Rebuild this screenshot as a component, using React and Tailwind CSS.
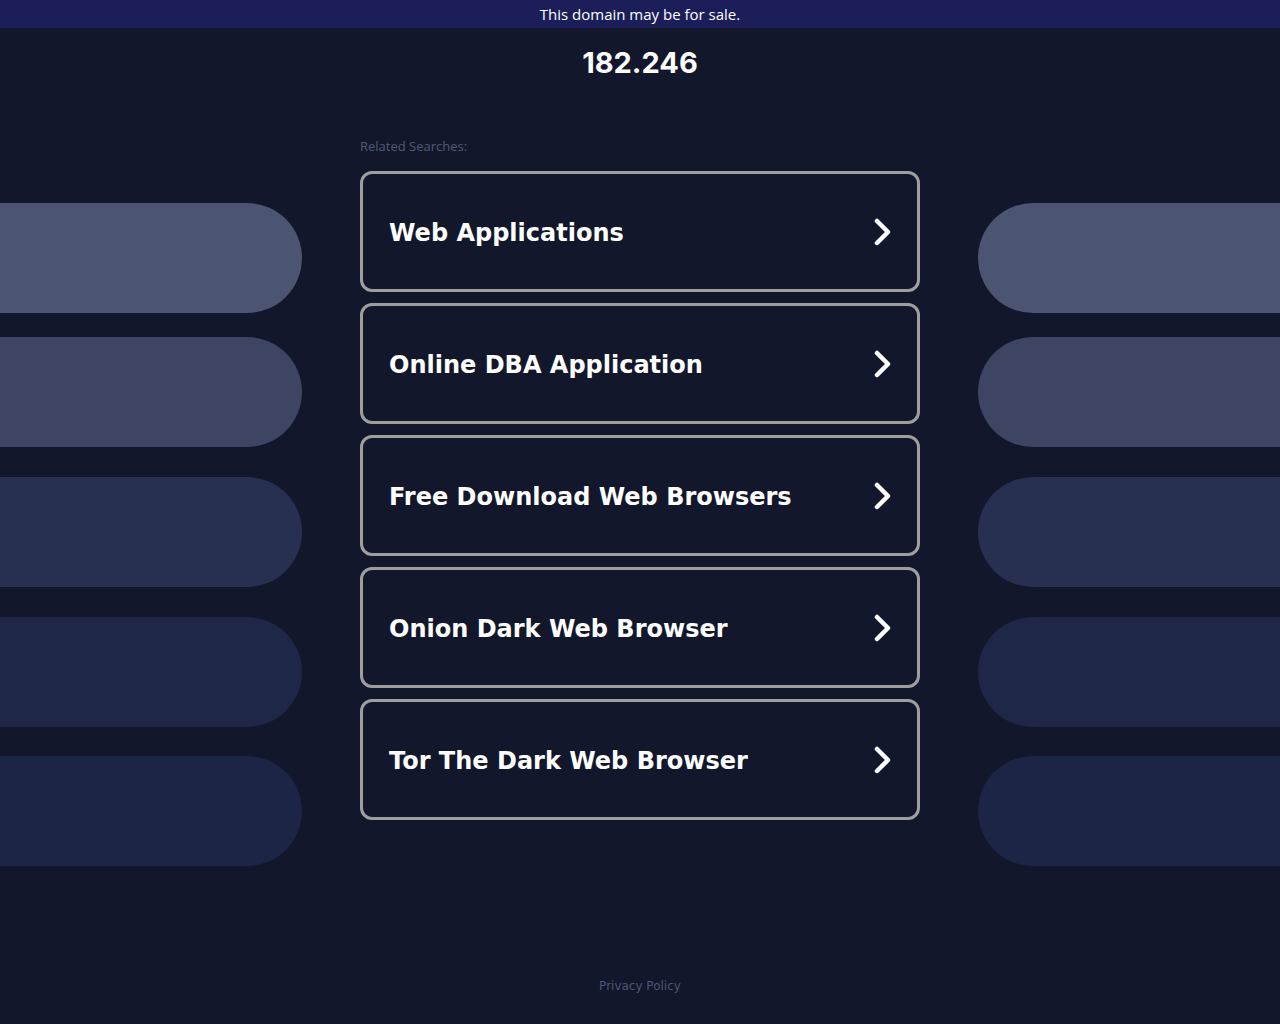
import React from "react";

const cards = [
  "Web Applications",
  "Online DBA Application",
  "Free Download Web Browsers",
  "Onion Dark Web Browser",
  "Tor The Dark Web Browser",
];

const pills = [
  { c: "bg-[#4b5471]", mt: "mt-[175px]" },
  { c: "bg-[#3d4563]", mt: "mt-[24px]" },
  { c: "bg-[#283051]", mt: "mt-[30px]" },
  { c: "bg-[#1e2748]", mt: "mt-[30px]" },
  { c: "bg-[#1c2546]", mt: "mt-[29px]" },
];

function Chevron() {
  return (
    <svg width="22" height="28" viewBox="0 0 22 28" fill="none">
      <path d="M6 3 L17 14 L6 25" stroke="white" strokeWidth="4.5" strokeLinecap="round" strokeLinejoin="round" />
    </svg>
  );
}

export default function App() {
  return (
    <div className="min-h-[1024px] w-full bg-[#12172b] flex flex-col" style={{ fontFamily: '"DejaVu Sans", sans-serif' }}>
      <div className="h-[28px] bg-[#1b1e58] flex items-center justify-center text-white text-[15px]" style={{ fontFamily: '"Open Sans", sans-serif' }}>
        This domain may be for sale.
      </div>
      <div className="flex flex-1">
        <div className="w-[302px] flex flex-col">
          {pills.map((p, i) => (
            <div key={i} className={`h-[110px] rounded-r-[55px] ${p.c} ${p.mt}`} />
          ))}
        </div>
        <div className="w-[560px] mx-[58px] flex flex-col">
          <div className="text-center text-white font-bold text-[29px] leading-none mt-[20px]" style={{ fontFamily: 'Inter, sans-serif' }}>
            182.246
          </div>
          <div className="text-[13px] text-[#525a78] mt-[60px] h-[18px]" style={{ fontFamily: '"Open Sans", sans-serif' }}>
            Related Searches:
          </div>
          <div className="flex flex-col gap-[11px] mt-[16px]">
            {cards.map((t) => (
              <div key={t} className="h-[121px] border-[3px] border-[#9e9e9e] rounded-[12px] flex items-center justify-between pl-[26px] pr-[24px]">
                <span className="text-white font-bold text-[24px] pt-[2px]">{t}</span>
                <Chevron />
              </div>
            ))}
          </div>
          <div className="flex-1" />
          <div className="text-center text-[12px] text-[#4d5574] mb-[29px]" style={{ fontFamily: '"DejaVu Sans", sans-serif' }}>
            Privacy Policy
          </div>
        </div>
        <div className="w-[302px] flex flex-col">
          {pills.map((p, i) => (
            <div key={i} className={`h-[110px] rounded-l-[55px] ${p.c} ${p.mt}`} />
          ))}
        </div>
      </div>
    </div>
  );
}
